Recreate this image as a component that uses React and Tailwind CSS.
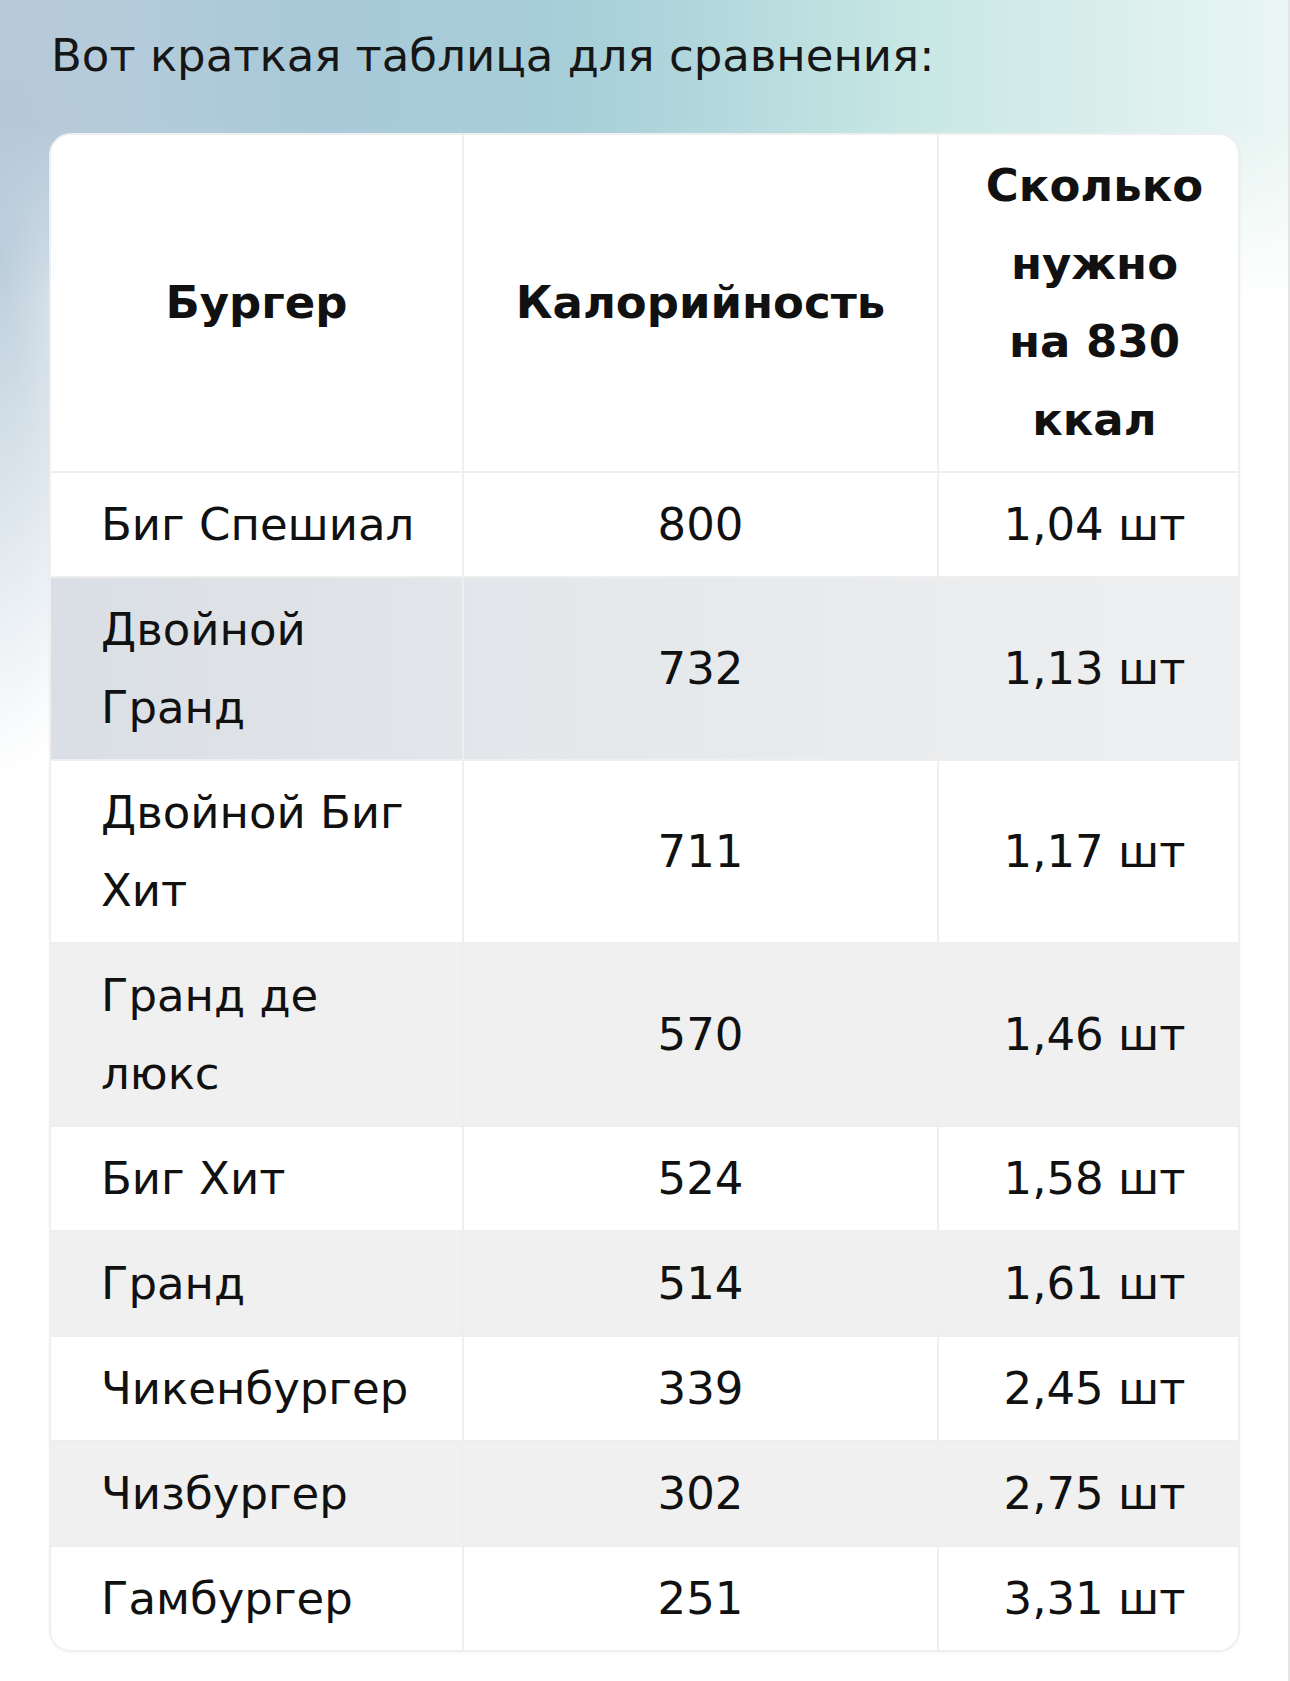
import React from "react";

const rows = [
  ["Биг Спешиал", "800", "1,04 шт"],
  ["Двойной Гранд", "732", "1,13 шт"],
  ["Двойной Биг Хит", "711", "1,17 шт"],
  ["Гранд де люкс", "570", "1,46 шт"],
  ["Биг Хит", "524", "1,58 шт"],
  ["Гранд", "514", "1,61 шт"],
  ["Чикенбургер", "339", "2,45 шт"],
  ["Чизбургер", "302", "2,75 шт"],
  ["Гамбургер", "251", "3,31 шт"],
];

export default function App() {
  return (
    <div className="w-[1290px] h-[1681px] overflow-hidden border-r-2 border-[#e2e4e6] bg-white bg-[radial-gradient(ellipse_140px_520px_at_0px_260px,rgba(178,198,214,0.85),rgba(178,198,214,0)),linear-gradient(to_bottom,rgba(255,255,255,0)_0px,rgba(255,255,255,0)_125px,#ffffff_300px),linear-gradient(to_right,#bccddc_0%,#a8c9d8_25%,#a6cfd8_45%,#c6e6e4_70%,#eaf6f3_100%)] bg-no-repeat font-['DejaVu_Sans',sans-serif] text-[#111]">
      <div className="pl-[51px] pt-[26px] h-[133px] text-[45px] leading-[60px] text-[#161616]">
        Вот краткая таблица для сравнения:
      </div>
      <div className="ml-[49px] w-[1191px] rounded-[22px] overflow-hidden border-2 border-[#efefef] shadow-[0_1px_3px_rgba(0,0,0,0.04)] bg-white">
        <table className="table-fixed border-collapse w-[1187px] text-[45px] leading-[78px]">
          <colgroup>
            <col className="w-[412px]" />
            <col className="w-[475px]" />
            <col className="w-[300px]" />
          </colgroup>
          <thead>
            <tr className="bg-white">
              <th className="border-r-2 border-b-2 border-[#eeeeee] px-[40px] py-[12px] text-center font-bold align-middle">Бургер</th>
              <th className="border-r-2 border-b-2 border-[#eeeeee] px-[20px] py-[12px] text-center font-bold align-middle">Калорийность</th>
              <th className="border-b-2 border-[#eeeeee] pl-[44px] pr-[32px] py-[12px] text-center font-bold align-middle">Сколько нужно на 830 ккал</th>
            </tr>
          </thead>
          <tbody>
            {rows.map((r, i) => {
              const bg =
                i === 1
                  ? "bg-[linear-gradient(to_right,#dadfe5,#e6e9ec_50%,#eeeff0)]"
                  : i % 2 === 1
                  ? "bg-[#f0f0f0]"
                  : "bg-white";
              const last = i === rows.length - 1;
              return (
                <tr key={i} className={bg}>
                  <td className={`border-r-2 ${last ? "" : "border-b-2"} border-[#eeeeee] pl-[50px] pr-[20px] py-[12.5px] text-left font-normal align-middle`}>{r[0]}</td>
                  <td className={`border-r-2 ${last ? "" : "border-b-2"} border-[#eeeeee] px-[30px] py-[12.5px] text-center align-middle`}>{r[1]}</td>
                  <td className={`${last ? "" : "border-b-2"} border-[#eeeeee] pl-[44px] pr-[32px] py-[12.5px] text-center align-middle`}>{r[2]}</td>
                </tr>
              );
            })}
          </tbody>
        </table>
      </div>
    </div>
  );
}
